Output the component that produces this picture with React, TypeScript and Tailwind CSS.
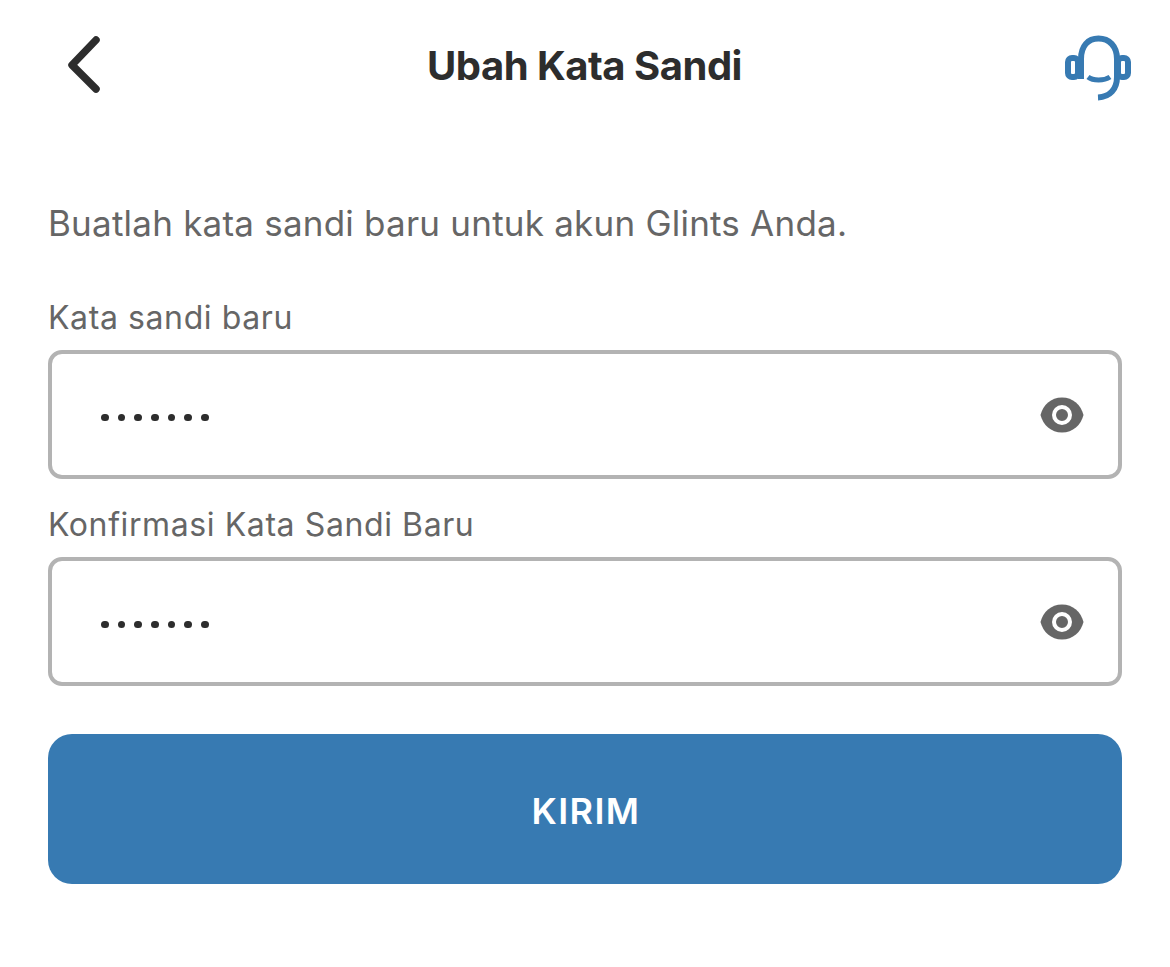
const BackIcon = () => (
  <svg width="40" height="70" viewBox="0 0 40 70" fill="none">
    <path d="M36 10 L12 35 L36 59" stroke="#2d2d2d" strokeWidth="7.5" strokeLinecap="round" strokeLinejoin="round" />
  </svg>
);

const SupportIcon = () => (
  <svg width="66" height="66" viewBox="0 0 66 66" fill="none" stroke="#377ab2">
    <path d="M16 44 V24 C16 11 23 3.5 33.5 3.5 C44 3.5 52 11 52 24 V42 C52 54 45 62 33 62.5" strokeWidth="6" />
    <rect x="3" y="23" width="10" height="19" rx="4" strokeWidth="6" />
    <rect x="53" y="23" width="10" height="19" rx="4" strokeWidth="6" />
    <path d="M23 42 C28 46 39 46 45 42" strokeWidth="5" />
  </svg>
);

const EyeIcon = () => (
  <svg width="44" height="36" viewBox="0 0 44 36" fill="none">
    <path d="M0.5 18 C3 8 11 0.5 22 0.5 C33 0.5 41 8 43.5 18 C41 28 33 35.5 22 35.5 C11 35.5 3 28 0.5 18 Z" fill="#666666" />
    <circle cx="22" cy="18" r="8" fill="none" stroke="#ffffff" strokeWidth="4" />
  </svg>
);

const PasswordField = ({ label }: { label: string }) => (
  <div className="flex flex-col">
    <label className="text-[32px] leading-[40px] text-[#666666] tracking-[0.6px]">{label}</label>
    <div className="mt-[12px] h-[129px] border-4 border-[#b3b3b3] rounded-[14px] flex items-center justify-between pl-[49px] pr-[34px] bg-white">
      <div className="flex gap-[9.2px] mt-[6px]">
        {[0, 1, 2, 3, 4, 5, 6].map((i) => (
          <div key={i} className="w-[7.5px] h-[7.5px] rounded-full bg-[#2d2d2d]" />
        ))}
      </div>
      <EyeIcon />
    </div>
  </div>
);

export default function App() {
  return (
    <div className="w-[1170px] h-[967px] bg-white px-[48px] flex flex-col font-['Inter',sans-serif]">
      <div className="h-[132px] flex items-center justify-between">
        <div className="ml-[12px] mb-[2px]">
          <BackIcon />
        </div>
        <span className="ml-[4px] text-[40px] font-bold tracking-[-0.5px] text-[#2d2d2d] leading-none">Ubah Kata Sandi</span>
        <div className="mr-[-9px] mb-[-4px]">
          <SupportIcon />
        </div>
      </div>
      <p className="mt-[67px] text-[35px] leading-[48px] text-[#666666] tracking-[0.22px]">
        Buatlah kata sandi baru untuk akun Glints Anda.
      </p>
      <div className="mt-[51px] flex flex-col gap-[26px]">
        <PasswordField label="Kata sandi baru" />
        <PasswordField label="Konfirmasi Kata Sandi Baru" />
      </div>
      <button className="mt-[48px] h-[150px] pt-[3px] pl-[2px] rounded-[24px] bg-[#377ab2] text-white text-[36px] font-semibold tracking-[1.4px]">
        KIRIM
      </button>
    </div>
  );
}
